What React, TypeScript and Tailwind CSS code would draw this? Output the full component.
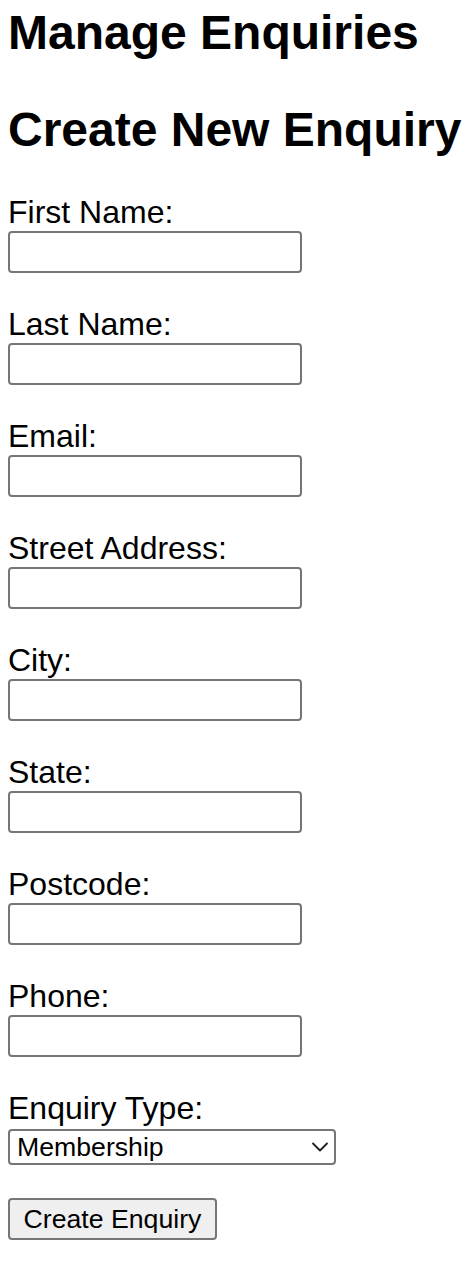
import React from "react";

const fields = [
  "First Name:",
  "Last Name:",
  "Email:",
  "Street Address:",
  "City:",
  "State:",
  "Postcode:",
  "Phone:",
];

export default function App() {
  return (
    <div className="min-h-[1264px] w-[472px] bg-white text-black font-['Liberation_Sans',Arial,sans-serif] px-[8px] pt-[5px]">
      <h1 className="text-[48px] font-bold leading-[55px] h-[55px] m-0">Manage Enquiries</h1>
      <h2 className="text-[48px] font-bold leading-[55px] h-[55px] mt-[42px] whitespace-nowrap">
        Create New Enquiry
      </h2>
      <form className="flex flex-col mt-[36px]" onSubmit={(e) => e.preventDefault()}>
        {fields.map((f) => (
          <div key={f} className="flex flex-col mb-[32px]">
            <label className="block text-[32px] leading-[38px] h-[38px]">{f}</label>
            <input
              type="text"
              className="block w-[294px] h-[42px] border-2 border-[#767676] rounded-[4px] bg-white px-[4px] text-[26.67px]"
            />
          </div>
        ))}
        <div className="flex flex-col">
          <label className="block text-[32px] leading-[38px] h-[38px]">Enquiry Type:</label>
          <div className="relative mt-[2px] w-[328px] h-[36px]">
            <select
              defaultValue="Membership"
              className="appearance-none block w-[328px] h-[36px] border-2 border-[#767676] rounded-[4px] bg-white pl-[7px] text-[26.67px] leading-[30px] text-black"
            >
              <option>Membership</option>
              <option>General</option>
              <option>Feedback</option>
            </select>
            <svg
              className="absolute left-[304px] top-[13px] pointer-events-none"
              width="16"
              height="10"
              viewBox="0 0 16 10"
              fill="none"
            >
              <path d="M1 1.5 L8 8.5 L15 1.5" stroke="#1f1f1f" strokeWidth="1.8" strokeLinecap="round" strokeLinejoin="round" />
            </svg>
          </div>
        </div>
        <div className="mt-[33px]">
          <button
            type="submit"
            className="w-[209px] h-[42px] border-2 border-[#767676] rounded-[4px] bg-[#efefef] text-[26.67px] leading-[30px] text-black text-center"
          >
            Create Enquiry
          </button>
        </div>
      </form>
    </div>
  );
}
